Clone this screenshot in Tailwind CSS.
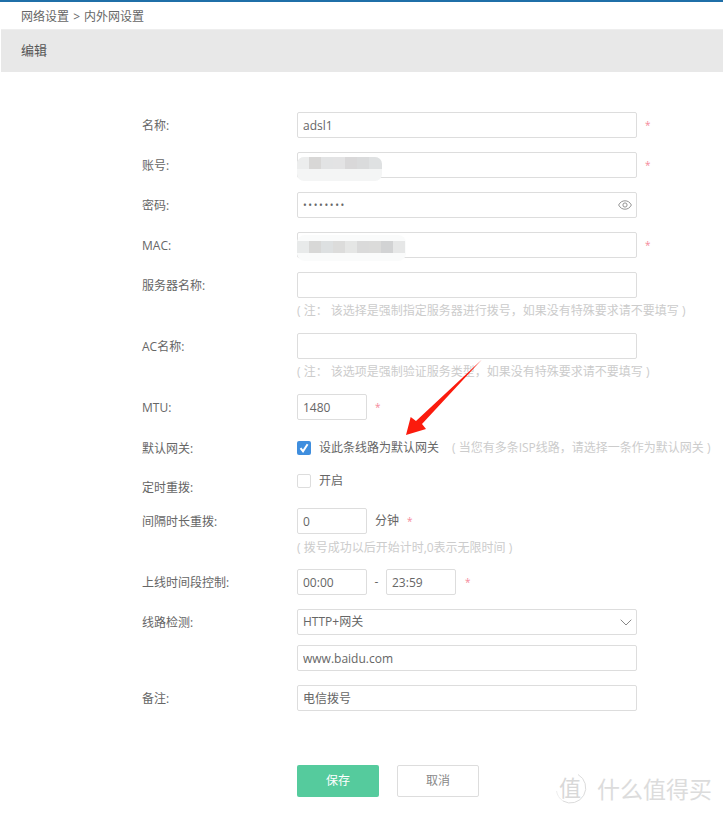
<!DOCTYPE html>
<html lang="zh-CN">
<head>
  <meta charset="UTF-8" />
  <meta name="viewport" content="width=device-width, initial-scale=1.0"/>
  <title>内外网设置</title>
  <script src="https://cdn.jsdelivr.net/npm/@tailwindcss/browser@4"></script>
</head>
<body class="bg-white font-['Open_Sans','Noto_Sans_CJK_SC',sans-serif] text-[12px] text-[#666] overflow-hidden">
<div class="relative w-[723px] h-[814px] overflow-hidden">

  <div class="h-[2px] bg-[#1f6fa8]"></div>
  <div class="h-[27px] pl-[21px] leading-[29px] text-[#666]">网络设置 <span class="mx-[1px]">&gt;</span> 内外网设置</div>
  <div class="ml-[1px] h-[43px] pl-[20px] leading-[40px] bg-[#e8e8e8] text-[13px] text-[#555] border-t border-[#eee]">编辑</div>

  <form class="pl-[142px] pt-[40px]">
    <div class="flex h-[26px] items-center mb-[14px]">
      <label class="w-[155px] mt-[1px]">名称:</label>
      <input value="adsl1" class="w-[340px] h-[26px] border border-[#ddd] rounded-[2px] px-[5px] outline-none text-[#666]" />
      <span class="ml-[8px] text-[10px] text-[#f58a9b]">*</span>
    </div>
    <div class="flex h-[26px] items-center mb-[14px]">
      <label class="w-[155px] mt-[1px]">账号:</label>
      <input class="w-[340px] h-[26px] border border-[#ddd] rounded-[2px] px-[5px] outline-none" />
      <span class="ml-[8px] text-[10px] text-[#f58a9b]">*</span>
    </div>
    <div class="flex h-[26px] items-center mb-[14px]">
      <label class="w-[155px] mt-[1px]">密码:</label>
      <div class="relative w-[340px] h-[26px]">
        <input type="password" value="12345678" class="w-full h-full border border-[#ddd] rounded-[2px] px-[5px] outline-none text-[#666] text-[10px] tracking-[1.6px]" />
        <svg class="absolute right-[5px] top-[8px]" width="14" height="10" viewBox="0 0 14 10" fill="none" stroke="#888" stroke-width="0.9"><path d="M0.6 5C2.2 2 4.4 0.8 7 0.8S11.8 2 13.4 5C11.8 8 9.6 9.2 7 9.2S2.2 8 0.6 5Z"/><circle cx="7" cy="5" r="2.1"/></svg>
      </div>
    </div>
    <div class="flex h-[26px] items-center mb-[14px]">
      <label class="w-[155px] mt-[1px]">MAC:</label>
      <input class="w-[340px] h-[26px] border border-[#ddd] rounded-[2px] px-[5px] outline-none" />
      <span class="ml-[8px] text-[10px] text-[#f58a9b]">*</span>
    </div>

    <div class="flex h-[26px] items-center">
      <label class="w-[155px] mt-[1px]">服务器名称:</label>
      <input class="w-[340px] h-[26px] border border-[#ddd] rounded-[2px] px-[5px] outline-none" />
    </div>
    <div class="pl-[155px] h-[35px] leading-[26px] text-[#ccc] whitespace-nowrap">( 注： 该选择是强制指定服务器进行拨号，如果没有特殊要求请不要填写 )</div>

    <div class="flex h-[26px] items-center">
      <label class="w-[155px] mt-[1px]">AC名称:</label>
      <input class="w-[340px] h-[26px] border border-[#ddd] rounded-[2px] px-[5px] outline-none" />
    </div>
    <div class="pl-[155px] h-[35px] leading-[26px] text-[#ccc] whitespace-nowrap">( 注： 该选项是强制验证服务类型，如果没有特殊要求请不要填写 )</div>

    <div class="flex h-[26px] items-center mb-[21px]">
      <label class="w-[155px] mt-[1px]">MTU:</label>
      <input value="1480" class="w-[70px] h-[26px] border border-[#ddd] rounded-[2px] px-[5px] outline-none text-[#666]" />
      <span class="ml-[8px] text-[10px] text-[#f58a9b]">*</span>
    </div>

    <div class="flex h-[14px] items-center mb-[19px]">
      <label class="w-[155px] mt-[1px]">默认网关:</label>
      <span class="w-[14px] h-[14px] rounded-[2px] bg-[#3f8ede] flex items-center justify-center">
        <svg width="10" height="10" viewBox="0 0 10 10" fill="none" stroke="#fff" stroke-width="2"><path d="M1.5 5.2L4 8.2L8.6 1.2"/></svg>
      </span>
      <span class="ml-[8px]">设此条线路为默认网关</span>
      <span class="ml-[13px] text-[#ccc] whitespace-nowrap">( 当您有多条ISP线路，请选择一条作为默认网关 )</span>
    </div>

    <div class="flex h-[14px] items-center mb-[20px]">
      <label class="w-[155px] mt-[13px]">定时重拨:</label>
      <span class="w-[14px] h-[14px] rounded-[2px] border border-[#ddd] bg-white"></span>
      <span class="ml-[8px]">开启</span>
    </div>

    <div class="flex h-[26px] items-center">
      <label class="w-[155px] mt-[1px]">间隔时长重拨:</label>
      <input value="0" class="w-[70px] h-[26px] border border-[#ddd] rounded-[2px] px-[5px] outline-none text-[#666]" />
      <span class="ml-[8px]">分钟</span>
      <span class="ml-[8px] text-[10px] text-[#f58a9b]">*</span>
    </div>
    <div class="pl-[155px] h-[35px] leading-[27px] text-[#ccc] whitespace-nowrap">( 拨号成功以后开始计时,0表示无限时间 )</div>

    <div class="flex h-[26px] items-center mb-[14px]">
      <label class="w-[155px] mt-[1px]">上线时间段控制:</label>
      <input value="00:00" class="w-[70px] h-[26px] border border-[#ddd] rounded-[2px] px-[5px] outline-none text-[#666]" />
      <span class="w-[19px] text-center">-</span>
      <input value="23:59" class="w-[70px] h-[26px] border border-[#ddd] rounded-[2px] px-[5px] outline-none text-[#666]" />
      <span class="ml-[9px] text-[10px] text-[#f58a9b]">*</span>
    </div>

    <div class="flex h-[26px] items-center mb-[10px]">
      <label class="w-[155px] mt-[1px]">线路检测:</label>
      <div class="relative w-[340px] h-[26px] border border-[#ddd] rounded-[2px] px-[5px] leading-[24px]">
        HTTP+网关
        <svg class="absolute right-[4px] top-[9px]" width="12" height="7" viewBox="0 0 12 7" fill="none" stroke="#888" stroke-width="1"><path d="M0.7 0.7L6 6L11.3 0.7"/></svg>
      </div>
    </div>
    <div class="flex h-[26px] items-center mb-[14px]">
      <span class="w-[155px]"></span>
      <input value="www.baidu.com" class="w-[340px] h-[26px] border border-[#ddd] rounded-[2px] px-[5px] outline-none text-[#666]" />
    </div>
    <div class="flex h-[26px] items-center">
      <label class="w-[155px] mt-[1px]">备注:</label>
      <input value="电信拨号" class="w-[340px] h-[26px] border border-[#ddd] rounded-[2px] px-[5px] outline-none text-[#666]" />
    </div>

    <div class="flex pl-[155px] pt-[54px] gap-[18px]">
      <button type="button" class="w-[82px] h-[32px] rounded-[2px] bg-[#55cb9d] text-white">保存</button>
      <button type="button" class="w-[82px] h-[32px] rounded-[2px] border border-[#ddd] bg-white text-[#888]">取消</button>
    </div>
  </form>

  <!-- 打码 -->
  <div class="absolute left-[297px] top-[157px] w-[85px] h-[24px] rounded-[7px] overflow-hidden bg-[#f4f5f5]">
    <div class="flex h-[12px]">
      <i class="w-[12px] bg-[#eceded]"></i><i class="w-[12px] bg-[#d8d7d6]"></i><i class="w-[12px] bg-[#e2e3e4]"></i><i class="w-[12px] bg-[#e3e3e4]"></i><i class="w-[12px] bg-[#d9d8d9]"></i><i class="w-[12px] bg-[#dadbdc]"></i><i class="w-[13px] bg-[#dfe1e2]"></i>
    </div>
  </div>
  <div class="absolute left-[297px] top-[235px] w-[109px] h-[26px] rounded-[8px] overflow-hidden bg-[#fafbfb] pt-[6px]">
    <div class="flex h-[12px]">
      <i class="w-[12px] bg-[#e8eaea]"></i><i class="w-[12px] bg-[#d8d8d7]"></i><i class="w-[12px] bg-[#dde0e1]"></i><i class="w-[12px] bg-[#dcdcdb]"></i><i class="w-[12px] bg-[#e5e6e5]"></i><i class="w-[12px] bg-[#dadada]"></i><i class="w-[12px] bg-[#dbdbda]"></i><i class="w-[12px] bg-[#d2d3d4]"></i><i class="w-[12px] bg-[#e6e7e7]"></i>
    </div>
  </div>

  <!-- 红色箭头 -->
  <svg class="absolute left-0 top-0 pointer-events-none" width="723" height="814" fill="#fb1b0d"><polygon points="481.7,359.7 422,424 426,429 406,435 410.7,417 416,421"/></svg>

  <!-- 水印 -->
  <svg class="absolute left-[554px] top-[771px]" width="34" height="34" viewBox="0 0 34 34" fill="none" stroke="#dcdcdc" stroke-width="1"><path d="M24 3.5A15 15 0 0 1 9 30"/><path d="M9 30A15 15 0 0 1 2.5 20" stroke="#eee"/></svg>
  <div class="absolute left-[559px] top-[773px] text-[#d8d8d8] text-[22px] leading-[28px]">值</div>
  <div class="absolute left-[597px] top-[773px] text-[#dcdcdc] text-[23px] leading-[32px] whitespace-nowrap">什么值得买</div>
</div>
</body>
</html>
